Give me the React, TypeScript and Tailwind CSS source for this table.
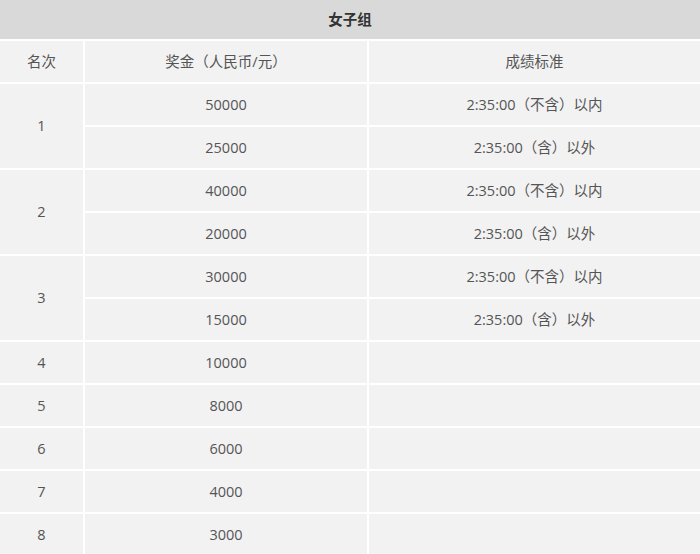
import { Fragment } from 'react'

const rows: { rank?: string; span?: number; prize: string; note: string }[] = [
  { rank: '1', span: 2, prize: '50000', note: '2:35:00（不含）以内' },
  { prize: '25000', note: '2:35:00（含）以外' },
  { rank: '2', span: 2, prize: '40000', note: '2:35:00（不含）以内' },
  { prize: '20000', note: '2:35:00（含）以外' },
  { rank: '3', span: 2, prize: '30000', note: '2:35:00（不含）以内' },
  { prize: '15000', note: '2:35:00（含）以外' },
  { rank: '4', span: 1, prize: '10000', note: '' },
  { rank: '5', span: 1, prize: '8000', note: '' },
  { rank: '6', span: 1, prize: '6000', note: '' },
  { rank: '7', span: 1, prize: '4000', note: '' },
  { rank: '8', span: 1, prize: '3000', note: '' },
]

const cell = 'bg-[#f2f2f2] flex items-center justify-center'

export default function App() {
  return (
    <div
      className="w-[700px] h-[554px] overflow-hidden bg-white text-[14.5px] text-[#555]"
      style={{ fontFamily: '"Open Sans", "Noto Sans CJK SC", sans-serif' }}
    >
      {/* title */}
      <div className="h-[39px] bg-[#d9d9d9] flex items-center justify-center font-bold text-[#333]">女子组</div>

      <div className="mt-[2px] grid grid-cols-[83px_282px_1fr] auto-rows-[41px] gap-[2px]">
        <div className={cell}>名次</div>
        <div className={cell}>奖金（人民币/元）</div>
        <div className={cell}>成绩标准</div>

        {rows.map((r, i) => (
          <Fragment key={i}>
            {r.rank && (
              <div className={r.span === 2 ? cell + ' row-span-2' : cell}>{r.rank}</div>
            )}
            <div className={cell}>{r.prize}</div>
            <div className={cell}>{r.note}</div>
          </Fragment>
        ))}
      </div>
    </div>
  )
}
